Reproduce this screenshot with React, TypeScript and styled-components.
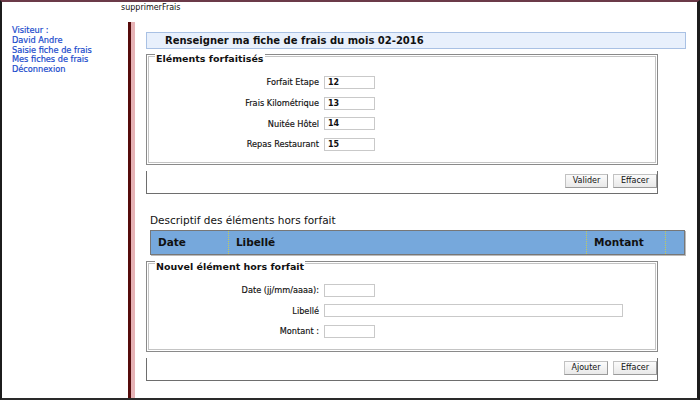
import styled, { createGlobalStyle } from "styled-components";

const GlobalStyle = createGlobalStyle`
  html, body {
    margin: 0;
    padding: 0;
    background: #ffffff;
  }
  * {
    box-sizing: border-box;
  }
`;

const Page = styled.div`
  width: 700px;
  height: 400px;
  overflow: hidden;
  display: flex;
  flex-direction: column;
  border-top: 2px solid #6b3a48;
  border-left: 2px solid #1c1c1c;
  border-right: 3px solid #1c1c1c;
  border-bottom: 2px solid #2a2a2a;
  font-family: "DejaVu Sans", Verdana, sans-serif;
  color: #111;
`;

const TopBar = styled.div`
  height: 20px;
  padding: 1px 0 0 119px;
  font-size: 8px;
  line-height: 10px;
  color: #111;
`;

const Body = styled.div`
  flex: 1;
  display: flex;
  min-height: 0;
`;

const Menu = styled.nav`
  width: 126px;
  padding: 4px 0 0 10px;
  display: flex;
  flex-direction: column;
`;

const MenuItem = styled.a`
  display: block;
  font-size: 8.2px;
  line-height: 9.8px;
  color: #1a4acc;
  text-decoration: none;
  -webkit-text-stroke: 0.2px #1a4acc;
`;

const Divider = styled.div`
  width: 7px;
  border-left: 3px solid #560c0c;
  background: #e6b3b6;
`;

const Content = styled.main`
  flex: 1;
  padding: 10px 11px 0 11px;
  display: flex;
  flex-direction: column;
`;

const TitleBox = styled.div`
  height: 17px;
  background: #e8f0fc;
  border: 1px solid #a9c1e4;
  padding-left: 18px;
  font-size: 10px;
  font-weight: bold;
  line-height: 15px;
  color: #111;
`;

const FieldSet = styled.fieldset<{ $top: number }>`
  width: 512px;
  margin: ${(p) => p.$top}px 0 0 0;
  padding: 8px 0 9.5px 0;
  border: 1px solid #8a8a8a;
  box-shadow: inset 0 0 0 1px #ffffff, inset 0 0 0 2px #c4c4c4;
  min-width: 0;
`;

const Legend = styled.legend`
  padding: 10px 1px 0 1px;
  margin-left: 8px;
  font-size: 9.5px;
  font-weight: bold;
  line-height: 10px;
  background: linear-gradient(transparent 9px, #ffffff 9px);
  color: #111;
`;

const Row = styled.div`
  display: grid;
  grid-template-columns: 172px auto;
  align-items: center;
  column-gap: 5px;
  height: 20.7px;
`;

const Label = styled.label`
  justify-self: end;
  font-size: 8.2px;
  color: #111;
  -webkit-text-stroke: 0.15px #111;
`;

const Input = styled.input<{ $w: number }>`
  width: ${(p) => p.$w}px;
  height: 13px;
  border: 1px solid #c9c9c9;
  padding: 0 3px;
  font-family: "DejaVu Sans", Verdana, sans-serif;
  font-size: 8px;
  font-weight: 600;
  color: #111;
  outline: none;
  background: #fff;
`;

const ButtonBar = styled.div`
  width: 512px;
  height: 23px;
  margin-top: 6px;
  border: 1px solid #6e6e6e;
  border-top: none;
  display: flex;
  justify-content: flex-end;
  align-items: flex-start;
  gap: 5px;
  padding-top: 3px;
`;

const Button = styled.button<{ $w: number }>`
  width: ${(p) => p.$w}px;
  height: 14px;
  padding: 0;
  border: 1px solid #c2c2c2;
  border-right-color: #9a9a9a;
  border-bottom-color: #9a9a9a;
  background: linear-gradient(#fbfbfb, #e9e9e9);
  font-family: "DejaVu Sans", Verdana, sans-serif;
  font-size: 8px;
  line-height: 12px;
  color: #111;
`;

const SectionTitle = styled.h2`
  margin: 19.5px 0 0 4px;
  font-size: 10.5px;
  font-weight: normal;
  line-height: 13px;
  color: #111;
`;

const Table = styled.table`
  margin: 3px 0 0 4px;
  width: 535px;
  height: 25px;
  border-collapse: collapse;
  background: #76a8dc;
  border: 1px solid #777;
  box-shadow: 1px 1px 0 #bbb;
`;

const Th = styled.th<{ $w: number }>`
  width: ${(p) => p.$w}px;
  padding: 0 0 0 7px;
  text-align: left;
  font-size: 10.5px;
  font-weight: bold;
  color: #111;
  border-right: 1px dotted #c3cc5a;
  &:last-child {
    border-right: none;
  }
`;

export default function App() {
  return (
    <>
      <GlobalStyle />
      <Page>
        <TopBar>supprimerFrais</TopBar>
        <Body>
          <Menu>
            <MenuItem>Visiteur :</MenuItem>
            <MenuItem>David Andre</MenuItem>
            <MenuItem href="#">Saisie fiche de frais</MenuItem>
            <MenuItem href="#">Mes fiches de frais</MenuItem>
            <MenuItem href="#">Déconnexion</MenuItem>
          </Menu>
          <Divider />
          <Content>
            <TitleBox>Renseigner ma fiche de frais du mois 02-2016</TitleBox>

            <FieldSet $top={-5}>
              <Legend>Eléments forfaitisés</Legend>
              <Row>
                <Label>Forfait Etape</Label>
                <Input $w={51} defaultValue="12" />
              </Row>
              <Row>
                <Label>Frais Kilométrique</Label>
                <Input $w={51} defaultValue="13" />
              </Row>
              <Row>
                <Label>Nuitée Hôtel</Label>
                <Input $w={51} defaultValue="14" />
              </Row>
              <Row>
                <Label>Repas Restaurant</Label>
                <Input $w={51} defaultValue="15" />
              </Row>
            </FieldSet>
            <ButtonBar>
              <Button $w={43}>Valider</Button>
              <Button $w={44}>Effacer</Button>
            </ButtonBar>

            <SectionTitle>Descriptif des éléments hors forfait</SectionTitle>
            <Table>
              <thead>
                <tr>
                  <Th $w={78}>Date</Th>
                  <Th $w={359}>Libellé</Th>
                  <Th $w={79}>Montant</Th>
                  <Th $w={19}></Th>
                </tr>
              </thead>
            </Table>

            <FieldSet $top={-3}>
              <Legend>Nouvel élément hors forfait</Legend>
              <Row>
                <Label>Date (jj/mm/aaaa):</Label>
                <Input $w={51} />
              </Row>
              <Row>
                <Label>Libellé</Label>
                <Input $w={299} />
              </Row>
              <Row>
                <Label>Montant :</Label>
                <Input $w={51} />
              </Row>
            </FieldSet>
            <ButtonBar>
              <Button $w={44}>Ajouter</Button>
              <Button $w={44}>Effacer</Button>
            </ButtonBar>
          </Content>
        </Body>
      </Page>
    </>
  );
}
